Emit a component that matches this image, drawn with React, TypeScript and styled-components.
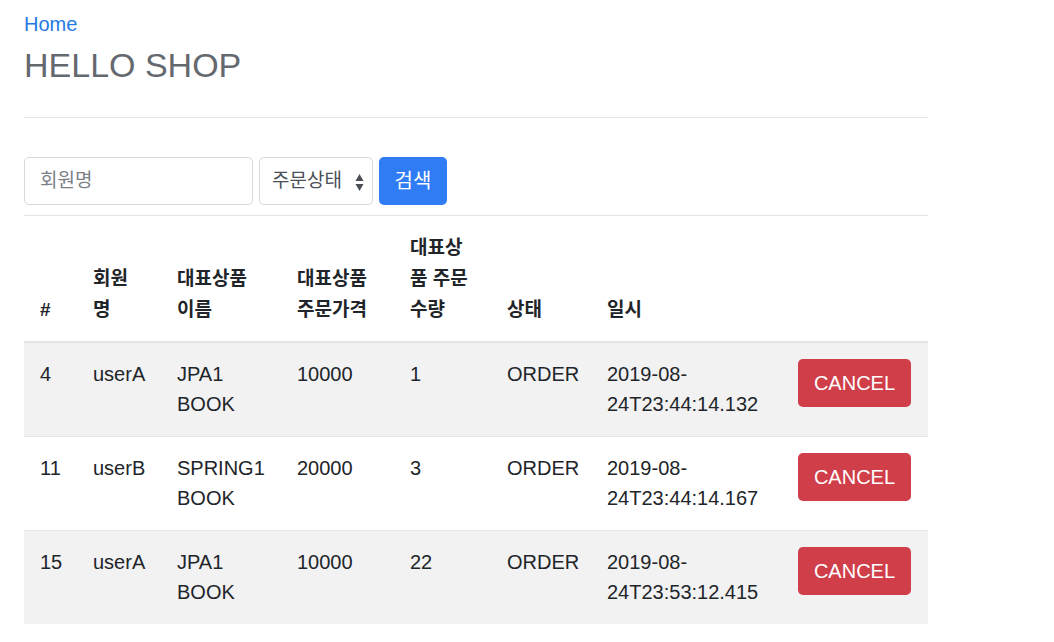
import React from "react";
import styled, { createGlobalStyle } from "styled-components";

const GlobalStyle = createGlobalStyle`
    body {
        margin: 0;
        background: #fff;
        color: #212529;
        font-family: "Liberation Sans", "Noto Sans CJK KR", Arial, sans-serif;
        font-size: 20px;
        line-height: 30px;
    }
    * {
        box-sizing: border-box;
    }
`;

interface Order {
    id: number;
    member: string;
    item: [string, string];
    price: number;
    count: number;
    status: string;
    date: [string, string];
}

const orders: Order[] = [
    { id: 4, member: "userA", item: ["JPA1", "BOOK"], price: 10000, count: 1, status: "ORDER", date: ["2019-08-", "24T23:44:14.132"] },
    { id: 11, member: "userB", item: ["SPRING1", "BOOK"], price: 20000, count: 3, status: "ORDER", date: ["2019-08-", "24T23:44:14.167"] },
    { id: 15, member: "userA", item: ["JPA1", "BOOK"], price: 10000, count: 22, status: "ORDER", date: ["2019-08-", "24T23:53:12.415"] },
];

const Page = styled.div`
    width: 928px;
    padding: 9px 0 0 24px;
`;

const HomeLink = styled.a`
    display: block;
    color: #2479e4;
    text-decoration: none;
    font-size: 20px;
    line-height: 30px;
`;

const Title = styled.h3`
    margin: 6px 0 0;
    font-size: 34px;
    line-height: 41px;
    font-weight: 500;
    color: #64696f;
`;

const Divider = styled.hr`
    margin: 31px 0 0;
    border: 0;
    border-top: 1px solid #e5e6e8;
`;

const SearchForm = styled.form`
    display: flex;
    gap: 6px;
    margin-top: 39px;
    height: 48px;
`;

const TextInput = styled.input`
    width: 229px;
    height: 48px;
    padding: 0 15px;
    border: 1px solid #d5d9dd;
    border-radius: 5px;
    font: inherit;
    font-size: 19px;
    color: #495057;
    outline: none;
    &::placeholder {
        color: #7b8187;
    }
`;

const SelectBox = styled.div`
    position: relative;
    width: 114px;
    height: 48px;
    padding: 0 12px;
    display: flex;
    align-items: center;
    border: 1px solid #d5d9dd;
    border-radius: 5px;
    font-size: 19px;
    color: #495057;
    svg {
        position: absolute;
        right: 8px;
        top: 15px;
    }
`;

const SearchButton = styled.button`
    width: 68px;
    height: 48px;
    border: 0;
    border-radius: 5px;
    background: #2f7cf5;
    color: #fff;
    font: inherit;
    font-size: 20px;
    padding: 0;
`;

const Table = styled.table`
    width: 904px;
    margin-top: 10px;
    border-collapse: collapse;
    table-layout: fixed;
`;

const HeadCell = styled.th`
    padding: 16px;
    border-top: 1px solid #e3e5e8;
    border-bottom: 2px solid #e3e5e8;
    text-align: left;
    vertical-align: bottom;
    font-weight: 700;
    font-size: 19px;
    line-height: 31px;
    white-space: nowrap;
`;

const Row = styled.tr<{ striped?: boolean }>`
    background: ${(props) => (props.striped ? "#f2f2f3" : "#fff")};
`;

const Cell = styled.td`
    padding: 16px 16px 17px;
    border-top: 1px solid #e3e5e8;
    vertical-align: top;
    white-space: nowrap;
`;

const CancelButton = styled.button`
    display: block;
    width: 113px;
    height: 48px;
    border: 0;
    border-radius: 5px;
    background: #d03e49;
    color: #fff;
    font: inherit;
    font-size: 20px;
    padding: 0;
`;

const SortArrows = () => (
    <svg width="9" height="19" viewBox="0 0 9 19">
        <path d="M4.5 1 L8.5 8 L0.5 8 Z" fill="#4a4f55" />
        <path d="M4.5 18 L8.5 11 L0.5 11 Z" fill="#4a4f55" />
    </svg>
);

const columns = [53, 84, 120, 113, 97, 100, 191, 146];

export default function App() {
    return (
        <Page>
            <GlobalStyle />
            <HomeLink href="#">Home</HomeLink>
            <Title>HELLO SHOP</Title>
            <Divider />
            <SearchForm onSubmit={(e) => e.preventDefault()}>
                <TextInput placeholder="회원명" />
                <SelectBox>
                    주문상태
                    <SortArrows />
                </SelectBox>
                <SearchButton type="submit">검색</SearchButton>
            </SearchForm>
            <Table>
                <colgroup>
                    {columns.map((w, i) => (
                        <col key={i} style={{ width: w }} />
                    ))}
                </colgroup>
                <thead>
                    <tr>
                        <HeadCell>#</HeadCell>
                        <HeadCell>
                            회원
                            <br />명
                        </HeadCell>
                        <HeadCell>
                            대표상품
                            <br />
                            이름
                        </HeadCell>
                        <HeadCell>
                            대표상품
                            <br />
                            주문가격
                        </HeadCell>
                        <HeadCell>
                            대표상
                            <br />품 주문
                            <br />
                            수량
                        </HeadCell>
                        <HeadCell>상태</HeadCell>
                        <HeadCell>일시</HeadCell>
                        <HeadCell />
                    </tr>
                </thead>
                <tbody>
                    {orders.map((o, i) => (
                        <Row key={o.id} striped={i % 2 === 0}>
                            <Cell>{o.id}</Cell>
                            <Cell>{o.member}</Cell>
                            <Cell>
                                {o.item[0]}
                                <br />
                                {o.item[1]}
                            </Cell>
                            <Cell>{o.price}</Cell>
                            <Cell>{o.count}</Cell>
                            <Cell>{o.status}</Cell>
                            <Cell>
                                {o.date[0]}
                                <br />
                                {o.date[1]}
                            </Cell>
                            <Cell>
                                <CancelButton type="button">CANCEL</CancelButton>
                            </Cell>
                        </Row>
                    ))}
                </tbody>
            </Table>
        </Page>
    );
}
